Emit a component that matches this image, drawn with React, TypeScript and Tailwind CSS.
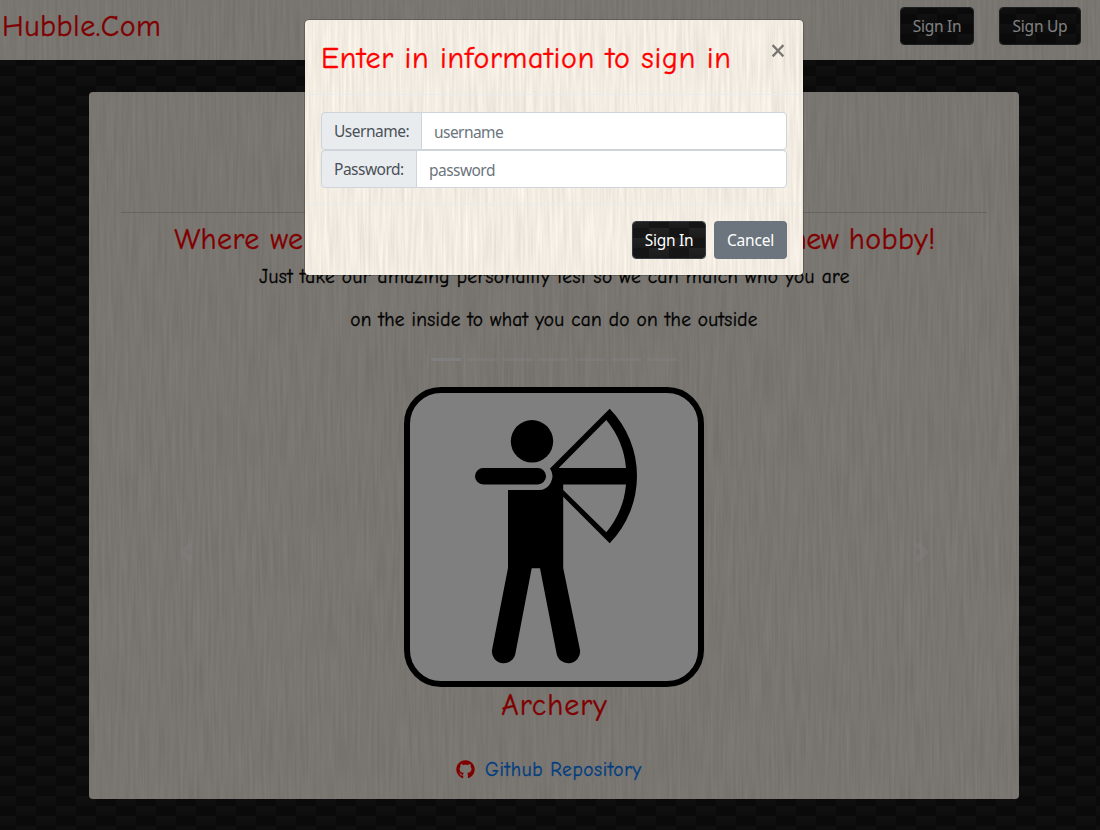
import React from "react";
import { FaGithub } from "react-icons/fa";

const comic = "font-['Comic_Sans_MS','Comic_Neue',Inter,sans-serif] [-webkit-text-stroke:0.35px_currentColor]";
const ui = "font-['Segoe_UI','Noto_Sans',sans-serif]";

function Wood({ id }: { id: string }) {
  return (
    <svg className="pointer-events-none absolute inset-0 -z-10 h-full w-full" aria-hidden="true">
      <filter id={id} x="0" y="0" width="100%" height="100%" colorInterpolationFilters="sRGB">
        <feTurbulence type="fractalNoise" baseFrequency="0.36 0.016" numOctaves="2" seed="7" />
        <feColorMatrix values="0.13 0 0 0 0.885  0.13 0 0 0 0.86  0.13 0 0 0 0.82  0 0 0 0 1" />
      </filter>
      <rect width="100%" height="100%" filter={`url(#${id})`} />
    </svg>
  );
}

function Carbon({ id }: { id: string }) {
  return (
    <svg className="pointer-events-none absolute inset-0 -z-10 h-full w-full" aria-hidden="true">
      <defs>
        <linearGradient id={`${id}-g`} x1="0" x2="0" y1="0" y2="1">
          <stop offset="0" stopColor="#222222" />
          <stop offset="1" stopColor="#1b1b1b" />
        </linearGradient>
        <pattern id={id} y="1" width="40" height="20" patternUnits="userSpaceOnUse">
          <rect width="40" height="20" fill="#151515" />
          <rect x="16" y="5" width="20" height="10" fill={`url(#${id}-g)`} />
          <rect x="-4" y="15" width="20" height="10" fill={`url(#${id}-g)`} />
          <rect x="36" y="15" width="20" height="10" fill={`url(#${id}-g)`} />
          <rect x="-4" y="-5" width="20" height="10" fill={`url(#${id}-g)`} />
          <rect x="36" y="-5" width="20" height="10" fill={`url(#${id}-g)`} />
        </pattern>
      </defs>
      <rect width="100%" height="100%" fill={`url(#${id})`} />
    </svg>
  );
}

function CarbonButton({ id, label, className }: { id: string; label: string; className: string }) {
  return (
    <button className={`relative isolate h-[38px] overflow-hidden rounded border border-[#343a40] pt-0.5 text-[15.5px] tracking-[-0.25px] text-white ${ui} ${className}`}>
      <Carbon id={id} />
      {label}
    </button>
  );
}

function Archer() {
  return (
    <svg className="h-[300px] w-[300px]" viewBox="0 0 300 300">
      <rect x="3" y="3" width="294" height="294" rx="34" fill="#fff" stroke="#000" strokeWidth="6" />
      <circle cx="128" cy="54.3" r="21.2" />
      <rect x="71" y="81" width="71" height="16.4" rx="8.2" />
      <path
        fillRule="evenodd"
        d="M104 103H134A13.8 13.8 0 0 0 146 81.5L205.7 21.7A96.6 96.6 0 0 1 205.7 156.3L159.2 109.7V181L176 263A11.8 11.8 0 0 1 152.5 266L136 181.3H127.7L111.5 266A11.8 11.8 0 0 1 88 263L104 181ZM154.7 81H222A86.7 86.7 0 0 0 202.3 33ZM159.2 97.4V103L202.3 145.3A86.7 86.7 0 0 0 222 97.4Z"
      />
    </svg>
  );
}

function Chevron({ d, className }: { d: string; className: string }) {
  return (
    <svg className={`absolute top-[191px] h-5 w-5 opacity-50 ${className}`} viewBox="0 0 8 8" fill="#fff">
      <path d={d} />
    </svg>
  );
}

function Field({ label, labelClass, placeholder }: { label: string; labelClass: string; placeholder: string }) {
  return (
    <div className={`flex h-[38px] ${ui}`}>
      <span className={`flex items-center whitespace-nowrap rounded-l border border-[#ced4da] bg-[#e9ecef] pl-3 pt-0.5 text-[15.5px] tracking-[-0.5px] text-[#495057] ${labelClass}`}>{label}</span>
      <input
        className="-ml-px min-w-0 flex-1 rounded-r border border-[#ced4da] bg-white px-3 pt-1 text-[15.5px] tracking-[-0.55px] placeholder:text-[#6c757d]"
        placeholder={placeholder}
      />
    </div>
  );
}

export default function App() {
  return (
    <div className="relative isolate h-[830px] w-[1100px] overflow-hidden bg-[#1c1c1c]">
      <Carbon id="page" />
      <nav className="relative isolate flex h-[60px] items-start pl-[2px] pr-[19px]">
        <Wood id="nav-wood" />
        <span className={`mt-1.5 text-[30px] leading-[42px] tracking-[0.5px] text-[#f00] ${comic}`}>Hubble.Com</span>
        <div className="ml-auto flex gap-[25px] pt-[7px]">
          <CarbonButton id="nav-in" label="Sign In" className="w-[74px]" />
          <CarbonButton id="nav-up" label="Sign Up" className="w-[82px]" />
        </div>
      </nav>

      <main className="relative isolate ml-[89px] mt-8 flex h-[707px] w-[930px] flex-col overflow-hidden rounded px-8 pt-[120px] text-center">
        <Wood id="main-wood" />
        <hr className="border-black/15" />
        <h2 className={`mt-1.5 whitespace-nowrap pl-0.5 text-[30px] leading-[42px] tracking-[0.42px] text-[#f00] ${comic}`}>
          Where we match your personality to a perfect <span className="tracking-[-0.5px]">new</span> hobby!
        </h2>
        <p className={`h-[43px] whitespace-nowrap pl-px pt-px text-[19.3px] leading-[30px] tracking-[0.4px] text-black ${comic}`}>Just take our amazing personality test so we can match who you are</p>
        <p className={`h-[47px] whitespace-nowrap pt-px text-[19.3px] leading-[30px] tracking-[0.3px] text-black ${comic}`}>on the inside to what you can do on the outside</p>
        <div className="relative flex flex-col items-center">
          <div className="flex h-[36px] gap-1.5 pt-[7px]">
            <span className="h-[3px] w-[30px] bg-white" />
            <span className="h-[3px] w-[30px] bg-white/50" />
            <span className="h-[3px] w-[30px] bg-white/50" />
            <span className="h-[3px] w-[30px] bg-white/50" />
            <span className="h-[3px] w-[30px] bg-white/50" />
            <span className="h-[3px] w-[30px] bg-white/50" />
            <span className="h-[3px] w-[30px] bg-white/50" />
          </div>
          <Archer />
          <Chevron className="left-[55px]" d="M5.25 0l-4 4 4 4 1.5-1.5L4.25 4l2.5-2.5L5.25 0z" />
          <Chevron className="right-[55px]" d="M2.75 0l-1.5 1.5L3.75 4l-2.5 2.5L2.75 8l4-4-4-4z" />
        </div>
        <h3 className={`pl-px text-[30px] leading-[38px] tracking-[1px] text-[#f00] ${comic}`}>Archery</h3>
        <div className={`mt-[30px] flex items-center pl-[335px] text-[19.3px] leading-[30px] tracking-[0.65px] ${comic}`}>
          <FaGithub className="-mt-0.5 h-[19px] w-[19px] text-[#f00]" />
          <a className="ml-2.5 whitespace-nowrap text-[#007bff]">Github Repository</a>
        </div>
      </main>

      <div className="absolute inset-0 bg-black/50" />

      <div className="absolute left-[305px] top-5 isolate h-[255px] w-[498px] overflow-hidden rounded outline outline-1 outline-black/20">
        <Wood id="modal-wood" />
        <div className="flex h-[75px] items-start justify-between border-b border-[#e9ecef] px-4">
          <h2 className={`whitespace-nowrap pt-[18px] text-[30px] leading-[42px] tracking-[0.7px] text-[#f00] ${comic}`}>Enter in information to sign in</h2>
          <button className={`mr-px mt-3 text-[28px] font-medium leading-9 text-black opacity-50 ${ui}`}>×</button>
        </div>
        <div className="h-[110px] border-b border-[#e9ecef] px-4 pt-[17px]">
          <Field label="Username:" labelClass="w-[101px]" placeholder="username" />
          <Field label="Password:" labelClass="w-[96px]" placeholder="password" />
        </div>
        <div className="flex justify-end gap-2 px-4 pt-4">
          <CarbonButton id="modal-in" label="Sign In" className="w-[74px]" />
          <button className={`h-[38px] w-[73px] rounded bg-[#6c757d] pt-0.5 text-[15.5px] tracking-[-0.2px] text-white ${ui}`}>Cancel</button>
        </div>
      </div>
    </div>
  );
}
